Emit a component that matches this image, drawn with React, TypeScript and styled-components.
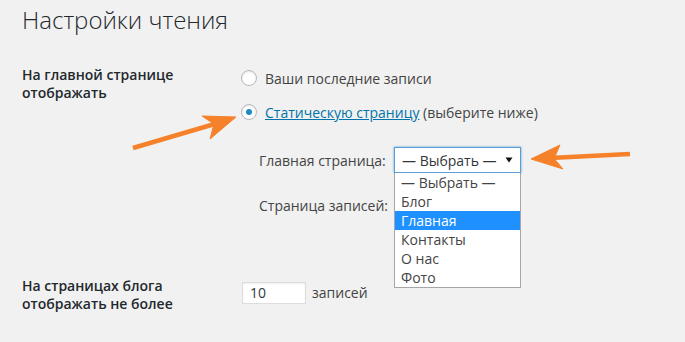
import React from "react";
import styled, { createGlobalStyle } from "styled-components";

const GlobalStyle = createGlobalStyle`
  html, body { margin: 0; padding: 0; background: #f1f1f1; }
  body { font-family: "Open Sans", "Noto Sans", sans-serif; color: #444; }
  * { box-sizing: border-box; }
`;

const Page = styled.div`
  position: relative;
  width: 685px;
  height: 342px;
  overflow: hidden;
  padding: 0 22px;
`;

const Title = styled.h1`
  margin: 5px 0 0;
  font-size: 24px;
  font-weight: 300;
  font-stretch: 94%;
  line-height: 30px;
  color: #23282d;
`;

const Row = styled.div<{ $top: number }>`
  display: grid;
  grid-template-columns: 220px 1fr;
  margin-top: ${(p) => p.$top}px;
`;

const RowLabel = styled.div`
  font-size: 14px;
  line-height: 18px;
  font-weight: 600;
  color: #23282d;
`;

const Field = styled.div`
  display: flex;
  flex-direction: column;
`;

const Options = styled.div`
  display: flex;
  flex-direction: column;
  gap: 10px;
`;

const OptionRow = styled.label`
  display: flex;
  align-items: center;
  gap: 8px;
  height: 24px;
  margin-left: -1px;
  font-size: 14px;
  color: #444;
`;

const Radio = styled.span<{ $checked?: boolean }>`
  position: relative;
  width: 16px;
  height: 16px;
  border-radius: 50%;
  border: 1px solid #b4b9be;
  background: #fff;
  box-shadow: inset 0 1px 2px rgba(0, 0, 0, 0.1);
  flex: none;
  &::after {
    content: "";
    display: ${(p) => (p.$checked ? "block" : "none")};
    position: absolute;
    left: 4px;
    top: 4px;
    width: 6px;
    height: 6px;
    border-radius: 50%;
    background: #1e8cbe;
  }
`;

const Link = styled.a`
  color: #0073aa;
  text-decoration: underline;
`;

const SubList = styled.div`
  display: flex;
  flex-direction: column;
  gap: 19px;
  margin-top: 23px;
  padding-left: 17px;
`;

const SubRow = styled.div`
  display: flex;
  align-items: center;
  gap: 6px;
  height: 26px;
  font-size: 14px;
  color: #444;
`;

const SubLabel = styled.span`
  width: 129px;
  white-space: nowrap;
`;

const SelectWrap = styled.div`
  position: relative;
  width: 127px;
`;

const SelectBox = styled.div<{ $focused?: boolean }>`
  display: flex;
  align-items: center;
  justify-content: space-between;
  height: 26px;
  padding: 0 7px;
  background: #fff;
  border: 1px solid ${(p) => (p.$focused ? "#5b9dd9" : "#ddd")};
  box-shadow: ${(p) => (p.$focused ? "0 0 2px rgba(30,140,190,0.8)" : "inset 0 1px 2px rgba(0,0,0,0.07)")};
  font-size: 14px;
  color: #32373c;
`;

const DropList = styled.ul`
  position: absolute;
  top: 100%;
  left: 0;
  z-index: 2;
  width: 127px;
  margin: 0;
  padding: 0;
  list-style: none;
  background: #fff;
  border: 1px solid #a6a6a6;
  border-top: none;
`;

const DropItem = styled.li<{ $active?: boolean }>`
  height: 19px;
  line-height: 19px;
  padding-left: 6px;
  font-size: 14px;
  color: ${(p) => (p.$active ? "#fff" : "#444")};
  background: ${(p) => (p.$active ? "#1e90ff" : "transparent")};
`;

const NumberRow = styled.div`
  display: flex;
  align-items: center;
  align-self: start;
  gap: 6px;
  margin-top: 5px;
  font-size: 14px;
  line-height: 20px;
  color: #444;
`;

const NumInput = styled.div`
  width: 64px;
  height: 22px;
  padding-left: 7px;
  line-height: 20px;
  background: #fff;
  border: 1px solid #ddd;
  box-shadow: inset 0 1px 2px rgba(0, 0, 0, 0.07);
  color: #32373c;
`;

const Overlay = styled.svg`
  position: absolute;
  left: 0;
  top: 0;
  pointer-events: none;
  z-index: 3;
`;

const Caret = () => (
  <svg width="8" height="6" viewBox="0 0 8 6">
    <polygon points="0.5,0.5 7.5,0.5 4,5.5" fill="#111" />
  </svg>
);

const items = ["— Выбрать —", "Блог", "Главная", "Контакты", "О нас", "Фото"];

export default function App() {
  return (
    <>
      <GlobalStyle />
      <Page>
        <Title>Настройки чтения</Title>
        <Row $top={31}>
          <RowLabel>
            На главной странице
            <br />
            отображать
          </RowLabel>
          <Field>
            <Options>
              <OptionRow>
                <Radio />
                <span>Ваши последние записи</span>
              </OptionRow>
              <OptionRow>
                <Radio $checked />
                <span>
                  <Link>Статическую страницу</Link> (выберите ниже)
                </span>
              </OptionRow>
            </Options>
            <SubList>
              <SubRow>
                <SubLabel>Главная страница:</SubLabel>
                <SelectWrap>
                  <SelectBox $focused>
                    <span>— Выбрать —</span>
                    <Caret />
                  </SelectBox>
                  <DropList>
                    {items.map((it) => (
                      <DropItem key={it} $active={it === "Главная"}>
                        {it}
                      </DropItem>
                    ))}
                  </DropList>
                </SelectWrap>
              </SubRow>
              <SubRow>
                <SubLabel>Страница записей:</SubLabel>
                <SelectWrap>
                  <SelectBox>
                    <span>— Выбрать —</span>
                    <Caret />
                  </SelectBox>
                </SelectWrap>
              </SubRow>
            </SubList>
          </Field>
        </Row>
        <Row $top={59}>
          <RowLabel>
            На страницах блога
            <br />
            отображать не более
          </RowLabel>
          <NumberRow>
            <NumInput>10</NumInput>
            <span>записей</span>
          </NumberRow>
        </Row>
        <Overlay width="685" height="342" viewBox="0 0 685 342">
          <g fill="#f5822a" stroke="#f5822a">
            <line x1="133" y1="148" x2="218" y2="123" strokeWidth="4.5" />
            <polygon points="236,117 202,116 214,124 210,139" strokeWidth="1" strokeLinejoin="round" />
            <line x1="630" y1="154" x2="550" y2="158" strokeWidth="4.5" />
            <polygon points="531,159 560,145 554,158.5 563,169" strokeWidth="1" strokeLinejoin="round" />
          </g>
        </Overlay>
      </Page>
    </>
  );
}
